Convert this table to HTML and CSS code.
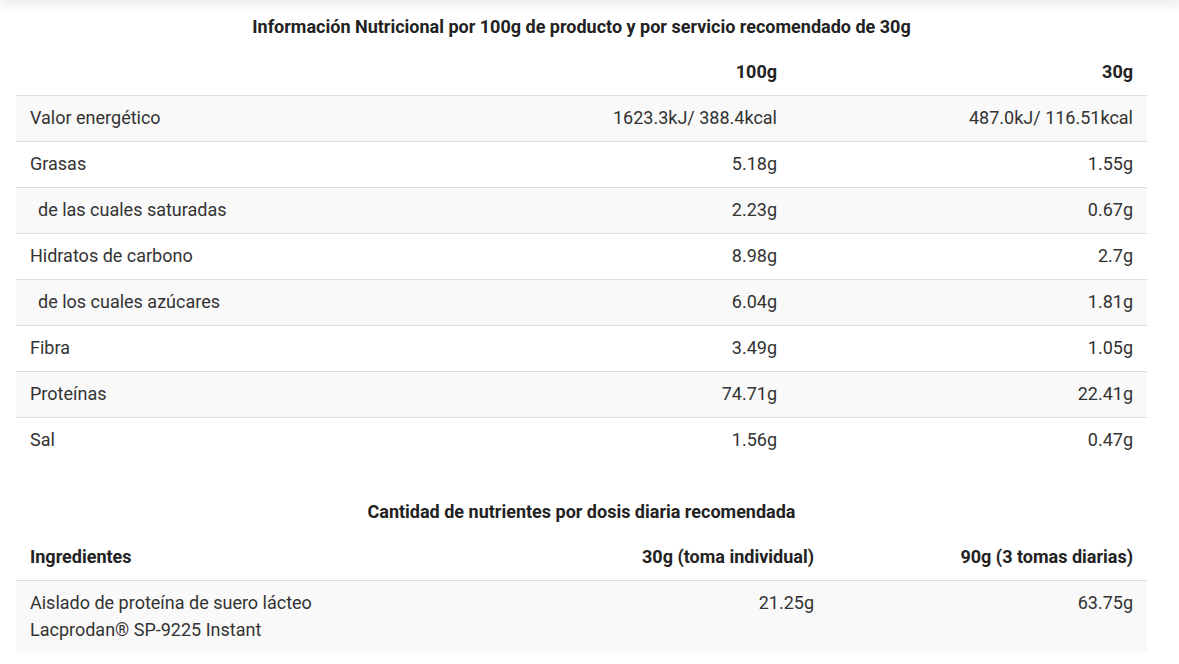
FILE: index.html
```html
<!DOCTYPE html>
<html lang="es">
<head>
  <meta charset="UTF-8">
  <title>Información Nutricional</title>
  <link rel="stylesheet" href="styles.css">
</head>
<body>
  <div class="top-shadow"></div>

  <div class="wrap">
    <div class="caption">Información Nutricional por 100g de producto y por servicio recomendado de 30g</div>
    <table class="nutri">
      <colgroup>
        <col>
        <col class="c-mid">
        <col class="c-last">
      </colgroup>
      <thead>
        <tr>
          <th></th>
          <th class="num">100g</th>
          <th class="num">30g</th>
        </tr>
      </thead>
      <tbody>
        <tr><td>Valor energético</td><td class="num">1623.3kJ/ 388.4kcal</td><td class="num">487.0kJ/ 116.51kcal</td></tr>
        <tr><td>Grasas</td><td class="num">5.18g</td><td class="num">1.55g</td></tr>
        <tr><td class="sub">de las cuales saturadas</td><td class="num">2.23g</td><td class="num">0.67g</td></tr>
        <tr><td>Hidratos de carbono</td><td class="num">8.98g</td><td class="num">2.7g</td></tr>
        <tr><td class="sub">de los cuales azúcares</td><td class="num">6.04g</td><td class="num">1.81g</td></tr>
        <tr><td>Fibra</td><td class="num">3.49g</td><td class="num">1.05g</td></tr>
        <tr><td>Proteínas</td><td class="num">74.71g</td><td class="num">22.41g</td></tr>
        <tr><td>Sal</td><td class="num">1.56g</td><td class="num">0.47g</td></tr>
      </tbody>
    </table>

    <div class="caption second">Cantidad de nutrientes por dosis diaria recomendada</div>
    <table class="nutri dosis">
      <colgroup>
        <col>
        <col class="c-mid">
        <col class="c-last">
      </colgroup>
      <thead>
        <tr>
          <th>Ingredientes</th>
          <th class="num">30g (toma individual)</th>
          <th class="num">90g (3 tomas diarias)</th>
        </tr>
      </thead>
      <tbody>
        <tr>
          <td>Aislado de proteína de suero lácteo<br>Lacprodan® SP-9225 Instant</td>
          <td class="num">21.25g</td>
          <td class="num">63.75g</td>
        </tr>
      </tbody>
    </table>
  </div>
</body>
</html>
```

FILE: styles.css
```css
body {
  margin: 0;
  background: #fff;
  color: #333;
  font-family: Roboto, "Liberation Sans", sans-serif;
  font-size: 18px;
}

.top-shadow {
  height: 0;
  box-shadow: 0 0 12px 2px rgba(0, 0, 0, 0.22);
}

.wrap {
  padding: 0 32px 0 16px;
}

.caption {
  text-align: center;
  font-weight: bold;
  color: #222;
  line-height: 22px;
  padding: 16px 0 12px;
}

.caption.second {
  margin-top: 22px;
}

.nutri {
  width: 100%;
  border-collapse: collapse;
  table-layout: fixed;
}

.nutri .c-mid,
.nutri .c-last {
  width: 356px;
}

.dosis .c-mid {
  width: 393px;
}

.dosis .c-last {
  width: 319px;
}

.nutri th,
.nutri td {
  padding: 9px 14px 10px;
  line-height: 26px;
  text-align: left;
  vertical-align: top;
}

.nutri th {
  font-weight: bold;
  color: #222;
}

.nutri td {
  border-top: 1px solid #ddd;
}

.dosis td {
  padding-top: 8px;
  line-height: 27px;
}

.nutri tbody tr:nth-child(odd) {
  background: #f9f9f9;
}

.nutri .num {
  text-align: right;
}

.nutri .sub {
  padding-left: 22px;
}
```
